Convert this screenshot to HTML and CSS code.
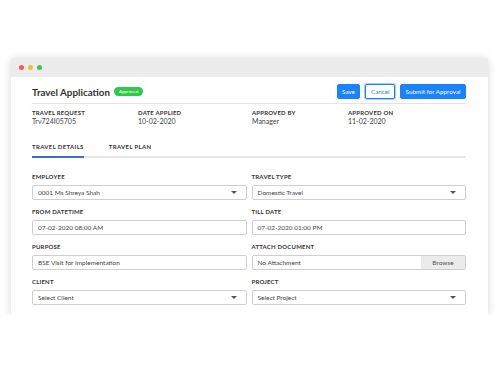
FILE: index.html
```html
<!DOCTYPE html>
<html lang="en">
<head>
    <meta charset="UTF-8">
    <title>Travel Application</title>
    <link rel="stylesheet" href="styles.css">
</head>
<body>
    <div class="window">
        <div class="titlebar">
            <span class="dot red"></span>
            <span class="dot yellow"></span>
            <span class="dot green"></span>
        </div>
        <div class="content">
            <div class="header">
                <h1>Travel Application</h1>
                <span class="badge">Approved</span>
                <div class="actions">
                    <button class="btn">Save</button>
                    <button class="btn outline">Cancel</button>
                    <button class="btn">Submit for Approval</button>
                </div>
            </div>

            <div class="info">
                <div>
                    <div class="label">TRAVEL REQUEST</div>
                    <div class="value">Trv724I05705</div>
                </div>
                <div>
                    <div class="label">DATE APPLIED</div>
                    <div class="value">10-02-2020</div>
                </div>
                <div>
                    <div class="label">APPROVED BY</div>
                    <div class="value">Manager</div>
                </div>
                <div>
                    <div class="label">APPROVED ON</div>
                    <div class="value">11-02-2020</div>
                </div>
            </div>

            <div class="tabs">
                <div class="tab active">TRAVEL DETAILS</div>
                <div class="tab">TRAVEL PLAN</div>
            </div>

            <div class="form">
                <div class="field">
                    <div class="label">EMPLOYEE</div>
                    <div class="input select">0001 Ms Shreya Shah</div>
                </div>
                <div class="field">
                    <div class="label">TRAVEL TYPE</div>
                    <div class="input select">Domestic Travel</div>
                </div>
                <div class="field">
                    <div class="label">FROM DATETIME</div>
                    <div class="input">07-02-2020 08:00 AM</div>
                </div>
                <div class="field">
                    <div class="label">TILL DATE</div>
                    <div class="input">07-02-2020 01:00 PM</div>
                </div>
                <div class="field">
                    <div class="label">PURPOSE</div>
                    <div class="input">BSE Visit for Implementation</div>
                </div>
                <div class="field">
                    <div class="label">ATTACH DOCUMENT</div>
                    <div class="input file">
                        <span class="file-name">No Attachment</span>
                        <span class="browse">Browse</span>
                    </div>
                </div>
                <div class="field">
                    <div class="label">CLIENT</div>
                    <div class="input select">Select Client</div>
                </div>
                <div class="field">
                    <div class="label">PROJECT</div>
                    <div class="input select">Select Project</div>
                </div>
            </div>
        </div>
    </div>
</body>
</html>
```

FILE: styles.css
```css
body {
    margin: 0;
    padding: 58px 12px 0 11px;
    background-color: #fff;
    font-family: 'Lato', 'Open Sans', sans-serif;
    color: #333;
}
.window {
    width: 477px;
    background-color: #fff;
    box-shadow: 0 1px 8px rgba(0, 0, 0, 0.16);
    border-radius: 2px;
}
.titlebar {
    height: 19px;
    background-color: #ececec;
    display: flex;
    align-items: center;
    gap: 4px;
    padding-left: 8px;
}
.dot {
    width: 5px;
    height: 5px;
    border-radius: 50%;
}
.red { background-color: #f25a52; }
.yellow { background-color: #f5bd2e; }
.green { background-color: #3dc93f; }

.content {
    padding: 7px 22px 10px 21px;
}
.header {
    display: flex;
    align-items: center;
    height: 15px;
    padding-bottom: 4px;
    border-bottom: 1.5px solid #e3e3e3;
}
h1 {
    margin: 0;
    font-size: 9.8px;
    font-weight: 700;
    color: #333;
}
.badge {
    margin-left: 4px;
    background-color: #2fc94a;
    color: #fff;
    font-size: 4.5px;
    line-height: 9px;
    padding: 0 5px;
    border-radius: 5px;
}
.actions {
    margin-left: auto;
    display: flex;
    gap: 5px;
}
.btn {
    height: 15px;
    padding: 0 4.5px;
    border: 1px solid #1a82fb;
    background-color: #1a82fb;
    color: #fff;
    font-family: inherit;
    font-size: 6.3px;
    border-radius: 2px;
}
.btn.outline {
    background-color: #fff;
    color: #1a82fb;
    box-shadow: 0 0 0 1px #a9cdfb;
}

.label {
    font-size: 6px;
    line-height: 8px;
    font-weight: 700;
    color: #333;
    letter-spacing: 0.2px;
}
.value {
    font-size: 7px;
    line-height: 9px;
    color: #444;
}
.info {
    display: grid;
    grid-template-columns: 106px 114px 96px 1fr;
    margin-top: 5px;
}

.tabs {
    display: flex;
    gap: 25px;
    margin-top: 17px;
    border-bottom: 2px solid #e6e6e6;
}
.tab {
    font-size: 6px;
    line-height: 8px;
    font-weight: 700;
    letter-spacing: 0.35px;
    color: #333;
    padding-bottom: 5px;
    margin-bottom: -2px;
    border-bottom: 2px solid transparent;
}
.tab.active {
    border-bottom-color: #3d6fcf;
}

.form {
    display: grid;
    grid-template-columns: 1fr 1fr;
    column-gap: 5px;
    row-gap: 8px;
    margin-top: 15px;
}
.field .label {
    margin-bottom: 4px;
}
.input {
    height: 15px;
    box-sizing: border-box;
    border: 1px solid #cfcfcf;
    border-radius: 2px;
    font-size: 6.5px;
    line-height: 13px;
    padding-left: 5px;
    color: #444;
    position: relative;
}
.select::after {
    content: '';
    position: absolute;
    right: 9px;
    top: 5px;
    border-left: 3px solid transparent;
    border-right: 3px solid transparent;
    border-top: 3.5px solid #555;
}
.file {
    display: flex;
    padding-left: 0;
}
.file-name {
    flex: 1;
    padding-left: 5px;
}
.browse {
    width: 44px;
    text-align: center;
    background-color: #ebebeb;
    color: #555;
}
```
